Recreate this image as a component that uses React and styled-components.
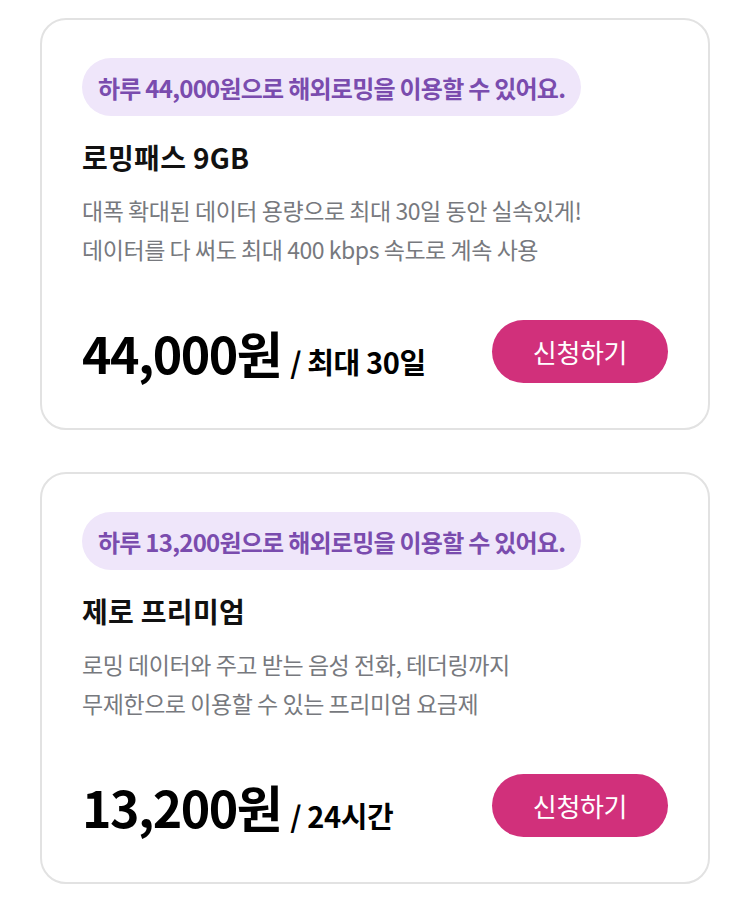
import styled, { createGlobalStyle } from "styled-components";

const plans = [
    {
        badge: "하루 44,000원으로 해외로밍을 이용할 수 있어요.",
        name: "로밍패스 9GB",
        desc: ["대폭 확대된 데이터 용량으로 최대 30일 동안 실속있게!", "데이터를 다 써도 최대 400 kbps 속도로 계속 사용"],
        price: "44,000원",
        period: "/ 최대 30일",
    },
    {
        badge: "하루 13,200원으로 해외로밍을 이용할 수 있어요.",
        name: "제로 프리미엄",
        desc: ["로밍 데이터와 주고 받는 음성 전화, 테더링까지", "무제한으로 이용할 수 있는 프리미엄 요금제"],
        price: "13,200원",
        period: "/ 24시간",
    },
];

export default function App() {
    return (
        <>
            <GlobalStyle />
            <Page>
                {plans.map((p, i) => (
                    <Card key={i}>
                        <Badge>{p.badge}</Badge>
                        <Title>{p.name}</Title>
                        <Desc>
                            {p.desc.map((line, j) => <div key={j}>{line}</div>)}
                        </Desc>
                        <PriceRow>
                            <Price>
                                {p.price}
                                <Period>{p.period}</Period>
                            </Price>
                            <ApplyButton type="button">신청하기</ApplyButton>
                        </PriceRow>
                    </Card>
                ))}
            </Page>
        </>
    );
}

const GlobalStyle = createGlobalStyle`
    body {
        margin: 0;
        background: #ffffff;
        font-family: "Noto Sans CJK KR", "Noto Sans", sans-serif;
    }
`;

const Page = styled.div`
    display: flex;
    flex-direction: column;
    gap: 42px;
    padding: 18px 40px 22px;
`;

const Card = styled.div`
    display: flex;
    flex-direction: column;
    align-items: flex-start;
    border: 2px solid #e2e2e2;
    border-radius: 26px;
    padding: 38px 40px 45px;
    background: #ffffff;
`;

const Badge = styled.div`
    display: inline-flex;
    align-items: center;
    height: 58px;
    padding: 0 16px;
    border-radius: 29px;
    background: #efe6fa;
    color: #7a4cae;
    font-size: 24px;
    font-weight: 700;
    letter-spacing: -0.75px;
`;

const Title = styled.div`
    margin-top: 23px;
    font-size: 28px;
    line-height: 36px;
    font-weight: 700;
    color: #111111;
    letter-spacing: 0.3px;
`;

const Desc = styled.div`
    margin-top: 16px;
    font-size: 23px;
    line-height: 39px;
    font-weight: 400;
    color: #77797e;
    letter-spacing: -0.45px;
`;

const PriceRow = styled.div`
    align-self: stretch;
    display: flex;
    align-items: center;
    justify-content: space-between;
    margin-top: 51px;
`;

const Price = styled.div`
    font-size: 50px;
    line-height: 60px;
    font-weight: 700;
    color: #000000;
    letter-spacing: -1.5px;
`;

const Period = styled.span`
    margin-left: 9px;
    font-size: 29px;
    line-height: 1;
    letter-spacing: -0.4px;
`;

const ApplyButton = styled.button`
    width: 176px;
    height: 63px;
    border: none;
    border-radius: 32px;
    background: #d1307b;
    color: #ffffff;
    font-family: inherit;
    font-size: 26px;
    font-weight: 400;
    letter-spacing: -0.35px;
    cursor: pointer;
`;
